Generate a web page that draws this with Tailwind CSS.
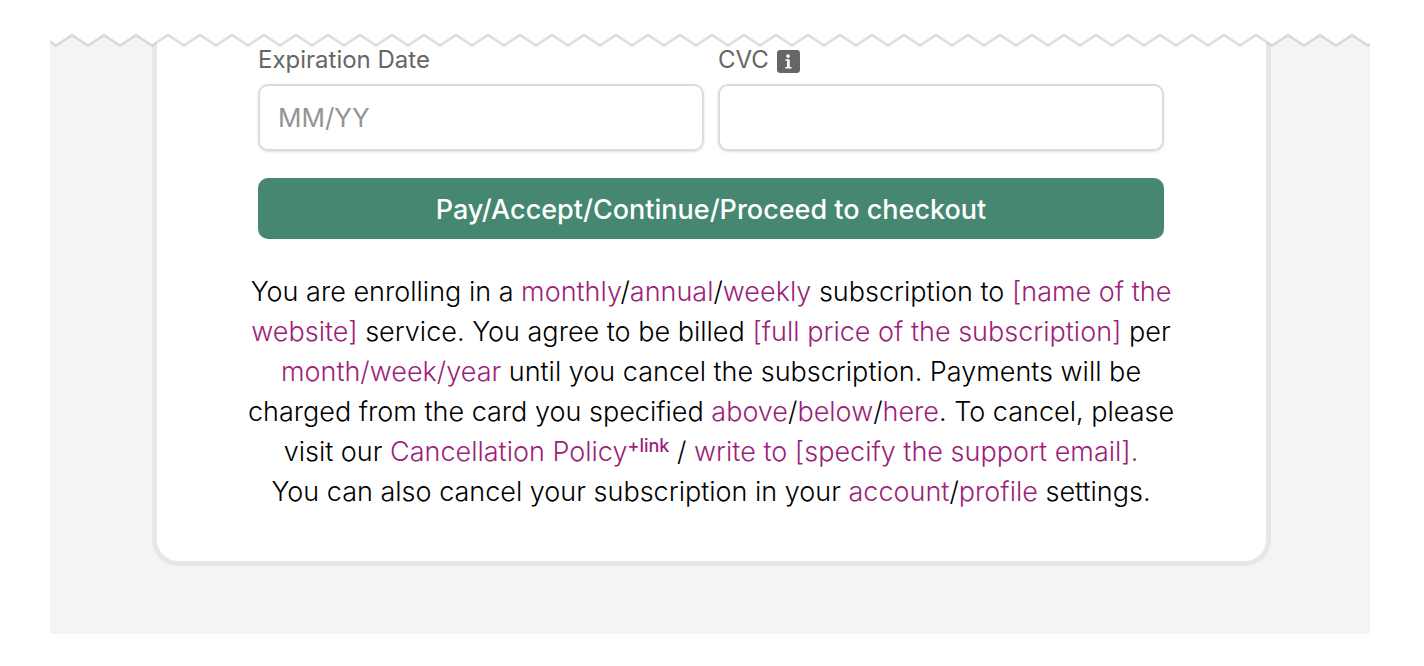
<!DOCTYPE html>
<html lang="en">
<head>
    <meta charset="UTF-8">
    <title>Checkout</title>
    <meta name="viewport" content="width=device-width, initial-scale=1.0">
    <script src="https://cdn.jsdelivr.net/npm/@tailwindcss/browser@4"></script>
</head>

<body class="bg-white font-['Inter',sans-serif] text-black">
    <main class="relative mt-8 mr-[54px] mb-8 ml-[50px] bg-[#f4f4f4] pr-[99px] pl-[102px] pb-[68px] rounded-b-xs">
        <form id="checkoutForm" class="rounded-b-[26px] border-5 border-t-0 border-[#e7e7e7] bg-white pr-[102px] pl-[101px] pt-3 pb-[49px]">
            <div class="grid grid-cols-2 gap-3.5">
                <div>
                    <label for="expiration" class="flex h-8 items-center text-2xl text-[#666]">Expiration Date</label>
                    <input type="text" id="expiration" placeholder="MM/YY" class="mt-2 h-[67px] w-full rounded-[10px] border-2 border-[#dcdcdc] px-[18px] text-[26px] shadow-sm placeholder:text-[#949494]">
                </div>
                <div>
                    <label for="cvc" class="flex h-8 items-center gap-2 text-2xl text-[#666]">
                        CVC
                        <svg class="mt-0.5 size-[23px]" viewBox="0 0 22 22" aria-hidden="true">
                            <rect width="22" height="22" rx="3" fill="#666"/>
                            <circle cx="10.6" cy="5.8" r="1.8" fill="#fff"/>
                            <path d="M8 8.800h4.200v7.400h1.700v1.500H7.900v-1.500h1.700v-5.900H8z" fill="#fff"/>
                        </svg>
                    </label>
                    <input type="text" id="cvc" class="mt-2 h-[67px] w-full rounded-[10px] border-2 border-[#dcdcdc] px-[18px] text-[26px] shadow-sm">
                </div>
            </div>
            <button type="submit" class="mt-[27px] h-[61px] w-full rounded-[10px] bg-[#458770] pt-1 text-[27px] font-medium text-white">Pay/Accept/Continue/Proceed to checkout</button>
            <p class="-mx-4 mt-[33px] text-center text-[27px] leading-10 font-light">
                You are enrolling in a <span class="text-[#9c1f7a]">monthly</span>/<span class="text-[#9c1f7a]">annual</span>/<span class="text-[#9c1f7a]">weekly</span> subscription to <span class="text-[#9c1f7a]">[name of the<br>
                website]</span> service. You agree to be billed <span class="text-[#9c1f7a]">[full price of the subscription]</span> per<br>
                <span class="text-[#9c1f7a]">month/week/year</span> until you cancel the subscription. Payments will be<br>
                charged from the card you specified <span class="text-[#9c1f7a]">above</span>/<span class="text-[#9c1f7a]">below</span>/<span class="text-[#9c1f7a]">here</span>. To cancel, please<br>
                visit our <span class="text-[#9c1f7a]">Cancellation Policy<sup class="text-lg leading-none font-medium">+link</sup></span> / <span class="text-[#9c1f7a]">write to [specify the support email].</span><br>
                You can also cancel your subscription in your <span class="text-[#9c1f7a]">account</span>/<span class="text-[#9c1f7a]">profile</span> settings.
            </p>
        </form>

        <!-- torn top edge -->
        <svg class="absolute inset-x-0 top-0 h-4 w-full" aria-hidden="true">
            <defs>
                <pattern id="zigzag" x="6" width="32" height="16" patternUnits="userSpaceOnUse">
                    <path d="M-16 3 0 13.500 16 3 32 13.500 48 3V-2H-16z" fill="#fff"/>
                    <path d="M-16 3 0 13.500 16 3 32 13.500 48 3" fill="none" stroke="#000" stroke-opacity=".13" stroke-width="2.600"/>
                </pattern>
            </defs>
            <rect width="100%" height="16" fill="url(#zigzag)"/>
        </svg>
    </main>
</body>
</html>
